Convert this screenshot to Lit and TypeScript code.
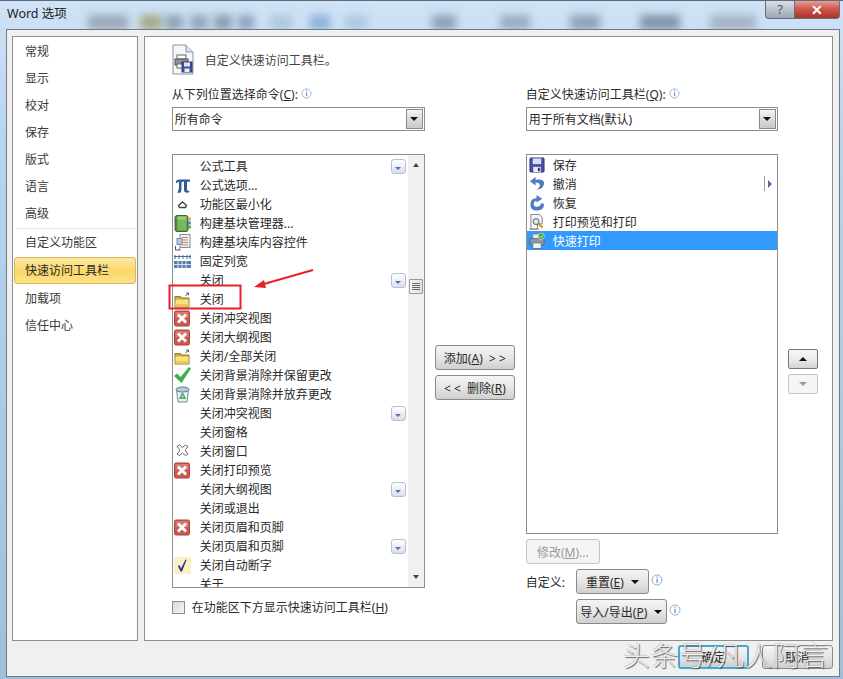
import { LitElement, html, css, svg } from "lit";
import { customElement } from "lit/decorators.js";

const info = html`<svg class="info" width="12" height="12" viewBox="0 0 12 12"><circle cx="6" cy="6" r="5" fill="#fff" stroke="#8fb0d8"/><rect x="5.500" y="2.600" width="1.200" height="1.200" fill="#5f8fc8"/><rect x="5.500" y="4.800" width="1.200" height="4.200" fill="#5f8fc8"/></svg>`;

const redX = svg`<rect x=".5" y="1" width="15" height="15" rx="1.500" fill="#cb5a50" stroke="#a8443c"/><rect x="1.500" y="2" width="13" height="6" fill="#d9776c"/><path d="M4 4.500l8 8M12 4.500l-8 8" stroke="#fff" stroke-width="2.800"/>`;
const folder = svg`<path d="M1 5.500h5.500l1 1.500H15v9H1z" fill="#c9a93e" stroke="#8f7a34"/><path d="M1.500 8.500h13v7h-13z" fill="#f7e27c"/><path d="M1.500 13h13v2.500h-13z" fill="#e9c95a"/><path d="M11.500 5l3-3m-2.200 0h2.200v2.200" fill="none" stroke="#555"/>`;

const icons: Record<string, unknown> = {
  pi: svg`<path d="M1.500 5Q2.500 2 6 2.500h10v2.300h-3v8q0 1.500 2.300 1v1.500q-5 1.300-5.300-2.300V4.800H7.500v6q0 3-1 5H3.300Q5 13 5 10V4.800q-1.800 0-2 1.500z" fill="#2d5c98"/>`,
  chev: svg`<path d="M4.500 9.500L8.500 6 12.500 9.500 11.500 11.500H5.500z" fill="none" stroke="#444" stroke-width="1.400"/>`,
  book: svg`<rect x="1" y=".5" width="13" height="16" rx="2" fill="#4f8f40" stroke="#3a6a32"/><rect x="3.500" y="1.500" width="9" height="14" fill="#7ab85e"/><rect x="3.500" y="1.500" width="9" height="3" fill="#9ccb7e"/><rect x="14" y="2.500" width="2.800" height="3" fill="#e8a820"/><rect x="14" y="6.500" width="2.800" height="3" fill="#2f8fd0"/><rect x="14" y="10.500" width="2.800" height="3" fill="#5da04a"/>`,
  blocks: svg`<rect x="6" y=".5" width="10" height="13" fill="#eef2f8" stroke="#7a8ca6"/><path d="M8 3.500h6M8 6h6M8 8.500h6M8 11h6" stroke="#c08a50"/><rect x="3" y="4.500" width="5" height="6" fill="#b9c8dc" stroke="#7a8ca6"/><path d="M1.500 12v4h3.500M5 14.500l1.500 1-1.500 1" fill="none" stroke="#555"/>`,
  ruler: svg`<rect x="0" y="8" width="17" height="7" fill="#5a7cb0"/><path d="M0 3.500h17M1 2v4M5 2v4M9 2v4M13 2v4M16 2v4" stroke="#4a6a9c" fill="none"/><path d="M0 11.500h17M4 8v7M8 8v7M12 8v7" stroke="#d8e4f4"/>`,
  folder,
  x: redX,
  check: svg`<path d="M0 9l3-2.500 3.500 3.500L15 0l2 1.500L7.500 16z" fill="#3eaf4a"/>`,
  bin: svg`<path d="M2.500 4h12l-1.500 12H4z" fill="#e2f0f2" stroke="#6f8c98"/><ellipse cx="8.500" cy="3.500" rx="6.500" ry="2.500" fill="#b6ccd4" stroke="#5f7c88"/><path d="M8.500 7.500l2.500 4.500h-5z" fill="none" stroke="#3aa050" stroke-width="1.300"/>`,
  greyx: svg`<path d="M3 3.500l2.500-1.500 3 2.500 3-2.500L14 3.500l-2.500 3v1.500L14 11l-2.500 1.500-3-2.500-3 2.500L3 11l2.500-3V6.500z" fill="#fff" stroke="#666"/>`,
  tick: svg`<rect x="0" y="0" width="17" height="17" fill="#fbf0c4"/><path d="M4 9l1.500-1 1.500 3.500L11.500 2.500l1 .5L8 14.500H6.500z" fill="#2a2f90"/>`,
  save: svg`<rect x="1" y="1" width="15" height="15" rx="1" fill="#4a50a8" stroke="#2c3580"/><rect x="4" y="1.500" width="9" height="6" fill="#d9def4"/><rect x="4.500" y="10.500" width="8" height="5.500" fill="#e8e8f0"/><rect x="9.500" y="11.500" width="2" height="3.500" fill="#333"/>`,
  undo: svg`<path d="M7 1L1 5.500l6 4.500V7.300q4.500-.8 4.500 2.500 0 3-4 4.700 9-.5 8.500-7.500Q15 2.500 7 4z" fill="#4f7cc4"/>`,
  redo: svg`<path d="M8 0l6 4-6 4V6Q5 6.500 5 9.500t3.500 3q3.500 0 4-3.500H16q0 7.500-7.500 7.500T1.500 9.500Q2 3.500 8 3.500z" fill="#4f7cc4"/>`,
  preview: svg`<path d="M2 .5h9l3 3v7H9v5.500H2z" fill="#f8f8fb" stroke="#7a7f90"/><circle cx="7.500" cy="8" r="3.200" fill="#d6e6f4" stroke="#555"/><path d="M10 10.500l4.500 4" stroke="#d89830" stroke-width="2.200"/><path d="M0 16h11" stroke="#888"/>`,
  print: svg`<rect x="4" y="1" width="9" height="6" fill="#e8edf2" stroke="#77808c"/><rect x="1" y="6" width="15" height="6.500" rx="1" fill="#8f9aa6" stroke="#5a6470"/><rect x="4" y="10.500" width="9" height="6" fill="#f2f4f7" stroke="#6a7480"/><circle cx="13" cy="3.500" r="3.300" fill="#3d9a45" stroke="#fff" stroke-width=".6"/><path d="M11.500 3.500l1.200 1.200 2-2.200" stroke="#fff" fill="none"/>`,
};

const leftRows: [string, string, boolean][] = [
  ["", "公式工具", true],
  ["pi", "公式选项...", false],
  ["chev", "功能区最小化", false],
  ["book", "构建基块管理器...", false],
  ["blocks", "构建基块库内容控件", false],
  ["ruler", "固定列宽", false],
  ["", "关闭", true],
  ["folder", "关闭", false],
  ["x", "关闭冲突视图", false],
  ["x", "关闭大纲视图", false],
  ["folder", "关闭/全部关闭", false],
  ["check", "关闭背景消除并保留更改", false],
  ["bin", "关闭背景消除并放弃更改", false],
  ["", "关闭冲突视图", true],
  ["", "关闭窗格", false],
  ["greyx", "关闭窗口", false],
  ["x", "关闭打印预览", false],
  ["", "关闭大纲视图", true],
  ["", "关闭或退出", false],
  ["x", "关闭页眉和页脚", false],
  ["", "关闭页眉和页脚", true],
  ["tick", "关闭自动断字", false],
  ["", "关于", false],
];
const rightRows: [string, string][] = [
  ["save", "保存"],
  ["undo", "撤消"],
  ["redo", "恢复"],
  ["preview", "打印预览和打印"],
  ["print", "快速打印"],
];
const nav1 = ["常规", "显示", "校对", "保存", "版式", "语言", "高级"];
const nav2 = ["加载项", "信任中心"];
const patches: [number, number, string][] = [
  [88, 40, "#8f9aa8"], [140, 22, "#9a9c6a"], [165, 18, "#8292a4"], [190, 18, "#8696a8"], [214, 18, "#7d8a9a"], [238, 16, "#7f93ae"],
  [270, 22, "#a9c0d8"], [310, 20, "#7fa4d4"], [345, 22, "#a8c2dc"], [432, 24, "#7e92aa"], [500, 30, "#8ea0b6"],
  [570, 30, "#7e92aa"], [640, 40, "#6f8298"], [710, 46, "#9aa8b8"],
];

@customElement("app-root")
export class AppRoot extends LitElement {
  static styles = css`
    :host { display: block; width: 843px; height: 679px; overflow: hidden; position: relative; font-family: "Noto Sans", "Noto Sans CJK SC", sans-serif; font-size: 12px; color: #2a2a2a; }
    .window { width: 843px; height: 679px; box-sizing: border-box; position: relative; overflow: hidden; display: flex; flex-direction: column; padding: 0 3px 2px 6px; background: linear-gradient(#cfe3f6, #b9d4ee 20%, #a3bedc); border-top: 1px solid #5f6a78; }
    .patch { position: absolute; top: 14px; height: 15px; filter: blur(4px); opacity: .8; }
    .titlebar { height: 28px; display: flex; flex: none; position: relative; }
    .title { font-size: 12.5px; line-height: 26px; margin-left: 1px; color: #1c1c1c; }
    .caps { margin-left: auto; display: flex; height: 19px; margin-top: -1px; }
    .cap { height: 19px; display: flex; align-items: center; justify-content: center; border: 1px solid #67707c; border-top: none; box-sizing: border-box; font-weight: 700; color: #fff; }
    .help { width: 29px; border-radius: 0 0 0 4px; border-right: none; background: linear-gradient(#d9e2ea, #bcc6d0 50%, #9aa6b2); color: #555; font-size: 13px; font-weight: 400; }
    .close { width: 46px; border-radius: 0 0 4px 0; background: linear-gradient(#e8a99e, #d0564a 50%, #a8332a); font-size: 14px; }
    .frame { flex: 1; background: #f0f0f0; border: 1px solid #6f7a86; padding: 6px 6px 0 5px; display: flex; flex-direction: column; position: relative; }
    .panels { display: flex; gap: 6px; height: 605px; flex: none; }
    .sidebar { width: 126px; box-sizing: border-box; border: 1px solid #8e8e8e; background: #fff; display: flex; flex-direction: column; padding: 1px; }
    .nav { height: 27px; flex: none; display: flex; align-items: center; padding-left: 11px; line-height: 14px; color: #3a3a3a; }
    .rule { height: 1px; background: #e4e4e4; margin: 1px 1px 0; flex: none; }
    .active { background: linear-gradient(#fde9a6, #fbd768 55%, #fde38a); border: 1px solid #d8b45a; border-radius: 3px; padding-left: 10px; box-sizing: border-box; margin: 1px 0 1px; color: #2a2a2a; }
    .main { width: 690px; box-sizing: border-box; border: 1px solid #8e8e8e; background: #fff; padding: 7px 0 0 27px; display: flex; flex-direction: column; }
    .head { display: flex; align-items: center; gap: 11px; height: 31px; flex: none; padding-bottom: 1px; margin-bottom: 12px; color: #444; }
    .cols { display: flex; flex: 1; }
    .col { width: 253px; display: flex; flex-direction: column; flex: none; }
    .label { height: 14px; line-height: 14px; margin-bottom: 5px; display: flex; align-items: center; white-space: nowrap; }
    .info { flex: none; }
    .label .info { margin: -4px 0 0 3px; width: 11px; height: 11px; }
    .combo { height: 24px; box-sizing: border-box; border: 1px solid #8e8e8e; display: flex; align-items: center; padding-left: 2px; background: #fff; flex: none; justify-content: space-between; margin-bottom: 23px; }
    .drop { width: 17px; height: 20px; margin-right: 1px; background: linear-gradient(#f4f4f4, #dcdcdc 50%, #c8c8c8); border: 1px solid #8a8a8a; box-sizing: border-box; display: flex; align-items: center; justify-content: center; }
    .down { width: 0; height: 0; border-left: 4px solid transparent; border-right: 4px solid transparent; border-top: 4px solid #111; flex: none; }
    .up { width: 0; height: 0; border-left: 4px solid transparent; border-right: 4px solid transparent; border-bottom: 4px solid #111; }
    .list { border: 1px solid #8e8e8e; box-sizing: border-box; background: #fff; overflow: hidden; display: flex; flex: none; }
    .left { height: 434px; }
    .rows { flex: 1; padding-top: 2px; min-width: 0; }
    .row { height: 19px; display: flex; align-items: center; white-space: nowrap; line-height: 19px; }
    .slot { width: 17px; height: 17px; margin-left: 1px; flex: none; display: flex; align-items: center; justify-content: center; }
    .slot svg { display: block; }
    .txt { margin-left: 9px; }
    .more { margin-left: auto; margin-right: 2px; width: 15px; height: 15px; box-sizing: border-box; border: 1px solid #b7bfd2; border-radius: 3px; background: linear-gradient(#fff, #eef0f7 50%, #d8deec); display: flex; align-items: flex-end; justify-content: center; padding-bottom: 3px; }
    .more i { display: block; width: 0; height: 0; border-left: 3px solid transparent; border-right: 3px solid transparent; border-top: 3px solid #5a6cae; }
    .bar { width: 16px; flex: none; background: #f0f0f0; display: flex; flex-direction: column; align-items: center; padding-top: 8px; box-sizing: border-box; }
    .bar .up { border-bottom-color: #444; border-left-width: 3.500px; border-right-width: 3.500px; }
    .thumb { margin-top: 112px; width: 14px; height: 15px; box-sizing: border-box; background: linear-gradient(90deg, #f8f8f8, #dedede); border: 1px solid #9a9a9a; border-radius: 1px; display: flex; flex-direction: column; align-items: center; justify-content: center; gap: 1px; }
    .thumb b { display: block; width: 8px; height: 1px; background: #666; }
    .bar .down { margin-top: auto; margin-bottom: 8px; border-top-color: #444; border-left-width: 3.500px; border-right-width: 3.500px; }
    .checkrow { display: flex; align-items: center; gap: 7px; margin-top: 12px; height: 14px; }
    .box { width: 13px; height: 13px; box-sizing: border-box; border: 1px solid #8e8e8e; background: linear-gradient(135deg, #d8d8d8, #f6f6f6); }
    .mid { width: 80px; margin: 0 11px 0 10px; flex: none; display: flex; flex-direction: column; gap: 5px; padding-top: 257px; }
    .btn { box-sizing: border-box; height: 25px; border: 1px solid #8a8a8a; border-radius: 3px; background: linear-gradient(#f5f5f5, #e6e6e6 50%, #cfcfcf); display: flex; align-items: center; justify-content: center; white-space: nowrap; gap: 7px; flex: none; }
    .dis { border-color: #c4c4c4; background: #f4f4f4; color: #9a9a9a; width: 74px; }
    .right { width: 252px; }
    .rlist { height: 380px; display: block; }
    .rrow { height: 19px; display: flex; align-items: center; padding-left: 1px; }
    .rrow .txt { margin-left: 7px; }
    .sel { background: #3399ff; color: #fff; }
    .split { margin-left: auto; margin-right: 5px; display: flex; align-items: center; gap: 3px; height: 15px; border-left: 1px solid #9aa0a8; padding-left: 3px; }
    .split i { display: block; width: 0; height: 0; border-top: 4px solid transparent; border-bottom: 4px solid transparent; border-left: 4px solid #5a6c8e; }
    .actions { display: flex; flex-direction: column; }
    .mod { margin-top: 5px; }
    .custom { display: flex; align-items: center; margin-top: 5px; height: 25px; }
    .custom > span { width: 50px; }
    .import { margin-top: 5px; margin-left: 50px; height: 25px; display: flex; align-items: center; }
    .r1 { width: 73px; }
    .r2 { width: 91px; }
    .custom .info, .import .info { margin: -3px 0 0 2px; }
    .ud { margin-left: 10px; width: 30px; flex: none; padding-top: 261px; display: flex; flex-direction: column; gap: 5px; }
    .sq { height: 20px; width: 30px; box-sizing: border-box; border: 1px solid #777; border-radius: 2px; background: linear-gradient(#f6f6f6, #ececec 50%, #d4d4d4); display: flex; align-items: center; justify-content: center; }
    .sqd { border-color: #c6c6c6; background: #f5f5f5; }
    .sqd .down { border-top-color: #999; }
    .footer { display: flex; justify-content: flex-end; gap: 13px; padding: 4px 0 0; }
    .foot { width: 71px; height: 24px; }
    .ok { border: 2px solid #3fa9d8; }
    .annot { position: absolute; left: 0; top: 0; pointer-events: none; }
    .mark { position: absolute; left: 623px; top: 638px; font-size: 27px; line-height: 34px; letter-spacing: 1px; color: rgba(245,245,245,.88); text-shadow: 1px 1px 1px rgba(40,40,40,.7), -1px -1px 0 rgba(120,120,120,.25); white-space: nowrap; font-weight: 300; }
  `;

  private drop() { return html`<span class="drop"><span class="down"></span></span>`; }

  render() {
    return html`<div class="window">
      ${patches.map(([x, w, c]) => html`<div class="patch" style="left:${x}px;width:${w}px;background:${c}"></div>`)}
      <div class="titlebar">
        <div class="title">Word 选项</div>
        <div class="caps"><div class="cap help">?</div><div class="cap close">✕</div></div>
      </div>
      <div class="frame">
        <div class="panels">
          <div class="sidebar">
            ${nav1.map((n) => html`<div class="nav">${n}</div>`)}
            <div class="rule"></div>
            <div class="nav">自定义功能区</div>
            <div class="nav active">快速访问工具栏</div>
            ${nav2.map((n) => html`<div class="nav">${n}</div>`)}
          </div>
          <div class="main">
            <div class="head">
              <svg width="22" height="31" viewBox="0 0 22 31"><path d="M1 1h13l7 7v22H1z" fill="#f4f6fa" stroke="#8a93a6"/><path d="M14 1v7h7" fill="#dfe4ee" stroke="#8a93a6"/><rect x="5" y="11" width="9" height="4" fill="#fff" stroke="#666"/><rect x="3" y="15" width="13" height="6" fill="#8a919c" stroke="#555"/><rect x="5" y="20" width="9" height="4" fill="#fff" stroke="#666"/><rect x="10" y="18" width="10" height="10" fill="#3f4ea0" stroke="#2a3578"/><rect x="12" y="18.500" width="6" height="4" fill="#dfe4f4"/><rect x="12.500" y="24.500" width="5" height="3.500" fill="#eee"/></svg>
              <span>自定义快速访问工具栏。</span>
            </div>
            <div class="cols">
              <div class="col">
                <div class="label"><span>从下列位置选择命令(<u>C</u>):</span>${info}</div>
                <div class="combo"><span>所有命令</span>${this.drop()}</div>
                <div class="list left">
                  <div class="rows">
                    ${leftRows.map(([ic, t, more]) => html`<div class="row">
                      <span class="slot">${ic ? html`<svg width="17" height="17" viewBox="0 0 17 17">${icons[ic]}</svg>` : ""}</span>
                      <span class="txt">${t}</span>
                      ${more ? html`<span class="more"><i></i></span>` : ""}
                    </div>`)}
                  </div>
                  <div class="bar"><span class="up"></span><div class="thumb"><b></b><b></b><b></b><b></b></div><span class="down"></span></div>
                </div>
                <div class="checkrow"><span class="box"></span><span>在功能区下方显示快速访问工具栏(<u>H</u>)</span></div>
              </div>
              <div class="mid">
                <div class="btn"><span>添加(<u>A</u>) &nbsp;&gt; &gt;</span></div>
                <div class="btn"><span>&lt; &lt;&nbsp; 删除(<u>R</u>)</span></div>
              </div>
              <div class="col right">
                <div class="label"><span>自定义快速访问工具栏(<u>Q</u>):</span>${info}</div>
                <div class="combo"><span>用于所有文档(默认)</span>${this.drop()}</div>
                <div class="list rlist">
                  ${rightRows.map(([ic, t], i) => html`<div class="rrow ${i === 4 ? "sel" : ""}">
                    <span class="slot"><svg width="16" height="16" viewBox="0 0 17 17">${icons[ic]}</svg></span>
                    <span class="txt">${t}</span>
                    ${i === 1 ? html`<span class="split"><i></i></span>` : ""}
                  </div>`)}
                </div>
                <div class="actions">
                  <div class="btn dis mod"><span>修改(<u>M</u>)...</span></div>
                  <div class="custom"><span>自定义:</span><div class="btn r1"><span>重置(<u>E</u>)</span><i class="down"></i></div>${info}</div>
                  <div class="import"><div class="btn r2"><span>导入/导出(<u>P</u>)</span><i class="down"></i></div>${info}</div>
                </div>
              </div>
              <div class="ud">
                <div class="sq"><span class="up"></span></div>
                <div class="sq sqd"><span class="down"></span></div>
              </div>
            </div>
          </div>
        </div>
        <div class="footer">
          <div class="btn foot ok">确定</div>
          <div class="btn foot">取消</div>
        </div>
      </div>
      <div class="mark">头条号/凡人阿言</div>
      <svg class="annot" width="843" height="679" viewBox="0 0 843 679">
        <rect x="169.500" y="284.500" width="71" height="23" fill="none" stroke="#e8202a" stroke-width="2"/>
        <path d="M313 269L262 283.500" stroke="#e8202a" stroke-width="2" fill="none"/>
        <path d="M254 286L264 279L266 287z" fill="#e8202a"/>
      </svg>
    </div>`;
  }
}
